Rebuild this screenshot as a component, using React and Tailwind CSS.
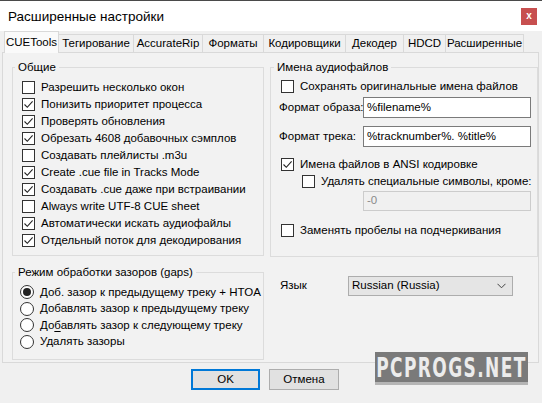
import React from "react";

const Check = ({ checked }) => (
  <span className="w-[13px] h-[13px] border border-[#333] bg-white flex items-center justify-center shrink-0">
    {checked && (
      <svg width="11" height="11" viewBox="0 0 11 11">
        <path d="M1.5 5.5 L4.3 8.3 L9.6 2.3" fill="none" stroke="#222" strokeWidth="1.1" />
      </svg>
    )}
  </span>
);

const CheckRow = ({ checked, children, className = "" }) => (
  <div className={"flex items-center h-[17px] gap-[6px] whitespace-nowrap " + className}>
    <Check checked={checked} />
    <span className="leading-none">{children}</span>
  </div>
);

const Radio = ({ checked, children }) => (
  <div className="flex items-center h-[16.5px] gap-[6px] whitespace-nowrap">
    <span className="w-[14px] h-[14px] rounded-full border border-[#333] bg-white flex items-center justify-center shrink-0">
      {checked && <span className="w-[8px] h-[8px] rounded-full bg-[#222]" />}
    </span>
    <span className="leading-none">{children}</span>
  </div>
);

const tabs = ["Тегирование", "AccurateRip", "Форматы", "Кодировщики", "Декодер", "HDCD", "Расширенные"];
const tabW = [75, 69, 61, 82, 58, 42, 78];

export default function App() {
  const font = { fontFamily: '"Liberation Sans", Arial, sans-serif' };
  return (
    <div
      className="w-[542px] h-[403px] bg-[#f0f0f0] overflow-hidden relative text-[11.5px] text-black flex flex-col"
      style={font}
    >
      {/* Title bar */}
      <div className="h-[31px] bg-white border-t border-[#4a4a4a] flex items-center justify-between pl-[8px] pr-[5px] shrink-0">
        <span className="text-[13.5px] leading-none whitespace-nowrap mt-[2px]">Расширенные настройки</span>
        <span className="w-[16px] h-[17px] bg-[#c74f4f] text-white text-[10px] font-bold flex items-center justify-center leading-none">
          x
        </span>
      </div>

      {/* Tabs */}
      <div className="h-[21px] flex items-end pl-[4px] relative z-10 shrink-0 whitespace-nowrap">
        <div className="w-[55px] h-[22px] bg-[#fafafa] border border-b-0 border-[#d9d9d9] flex items-center justify-center mb-[-1px]">
          CUETools
        </div>
        {tabs.map((t, i) => (
          <div
            key={t}
            style={{ width: tabW[i] }}
            className="h-[18px] bg-[#f0f0f0] border border-l-0 border-b-0 border-[#d9d9d9] flex items-center justify-center leading-none"
          >
            {t}
          </div>
        ))}
      </div>

      {/* Panel */}
      <div className="mx-[2px] w-[537px] h-[311px] border border-[#d9d9d9] bg-[#f2f2f2] shrink-0 flex gap-[6px] pl-[9px] pt-[6px]">
        {/* Left column */}
        <div className="flex flex-col w-[252px]">
          <fieldset className="border border-[#dcdcdc] h-[197px] pl-[9px] pt-[4px] m-0">
            <legend className="ml-[-7px] px-[3px] leading-[16px]">Общие</legend>
            <CheckRow checked={false}>Разрешить несколько окон</CheckRow>
            <CheckRow checked>Понизить приоритет процесса</CheckRow>
            <CheckRow checked>Проверять обновления</CheckRow>
            <CheckRow checked>Обрезать 4608 добавочных сэмплов</CheckRow>
            <CheckRow checked={false}>Создавать плейлисты .m3u</CheckRow>
            <CheckRow checked>Create .cue file in Tracks Mode</CheckRow>
            <CheckRow checked>Создавать .cue даже при встраивании</CheckRow>
            <CheckRow checked={false}>Always write UTF-8 CUE sheet</CheckRow>
            <CheckRow checked>Автоматически искать аудиофайлы</CheckRow>
            <CheckRow checked>Отдельный поток для декодирования</CheckRow>
          </fieldset>
          <fieldset className="border border-[#dcdcdc] h-[96px] mt-[8px] pl-[7px] pt-[4px] m-0">
            <legend className="ml-[-5px] px-[3px] leading-[16px] whitespace-nowrap">Режим обработки зазоров (gaps)</legend>
            <Radio checked>
              <span className="underline underline-offset-2">Д</span>об. зазор к предыдущему треку + HTOA
            </Radio>
            <Radio>Добавлять зазор к предыдущему треку</Radio>
            <Radio>
              До<span className="underline underline-offset-2">б</span>авлять зазор к следующему треку
            </Radio>
            <Radio>Удалять зазоры</Radio>
          </fieldset>
        </div>

        {/* Right column */}
        <div className="flex flex-col w-[251px]">
          <fieldset className="border border-[#dcdcdc] h-[198px] pl-[10px] pr-[6px] pt-[3px] m-0">
            <legend className="ml-[-7px] px-[3px] leading-[16px] whitespace-nowrap">Имена аудиофайлов</legend>
            <CheckRow checked={false}>Сохранять оригинальные имена файлов</CheckRow>
            <div className="flex items-center mt-[2px] h-[21px] whitespace-nowrap">
              <span className="w-[84px] text-right pr-[7px] ml-[-2px]">Формат образа:</span>
              <div className="flex-1 h-[21px] bg-white border border-[#7a7a7a] flex items-center px-[3px]">%filename%</div>
            </div>
            <div className="flex items-center mt-[8px] h-[21px] whitespace-nowrap">
              <span className="w-[84px] text-right pr-[7px] ml-[-2px]">Формат трека:</span>
              <div className="flex-1 h-[21px] bg-white border border-[#7a7a7a] flex items-center px-[3px]">%tracknumber%. %title%</div>
            </div>
            <CheckRow checked className="mt-[9px]">Имена файлов в ANSI кодировке</CheckRow>
            <CheckRow checked={false} className="ml-[21px]">Удалять специальные символы, кроме:</CheckRow>
            <div className="flex mt-[1px]">
              <div className="ml-[82px] flex-1 h-[20px] bg-[#f0f0f0] border border-[#cccccc] text-[#8a8a8a] flex items-center px-[3px]">-0</div>
            </div>
            <CheckRow checked={false} className="mt-[11px]">Заменять пробелы на подчеркивания</CheckRow>
          </fieldset>
          <div className="flex items-center mt-[19px] h-[20px] whitespace-nowrap">
            <span className="w-[78px] pl-[10px]">Язык</span>
            <div className="w-[165px] h-[20px] bg-[#e5e5e5] border border-[#adadad] flex items-center justify-between pl-[3px] pr-[6px]">
              <span>Russian (Russia)</span>
              <svg width="9" height="6" viewBox="0 0 9 6">
                <path d="M0.5 0.8 L4.5 4.8 L8.5 0.8" fill="none" stroke="#444" strokeWidth="1" />
              </svg>
            </div>
          </div>
        </div>
      </div>

      {/* Buttons */}
      <div className="flex gap-[9px] pl-[191px] mt-[6px]">
        <div className="w-[69px] h-[21px] bg-[#e1e1e1] border-2 border-[#0078d7] flex items-center justify-center">OK</div>
        <div className="w-[70px] h-[21px] bg-[#e1e1e1] border border-[#adadad] flex items-center justify-center">Отмена</div>
      </div>

      {/* Watermark overlay */}
      <div className="absolute left-[375px] top-[352px] w-[153px] h-[33px] bg-[#7a7a7a] border-b-[3px] border-[#b5b5b5] flex items-center justify-center overflow-hidden">
        <span
          className="text-[#ececec] text-[27px] font-bold leading-none tracking-[2px] scale-x-[0.7] whitespace-nowrap"
          style={{ fontFamily: '"DejaVu Sans", sans-serif', fontStretch: "condensed" }}
        >
          PCPROGS.NET
        </span>
      </div>
    </div>
  );
}
